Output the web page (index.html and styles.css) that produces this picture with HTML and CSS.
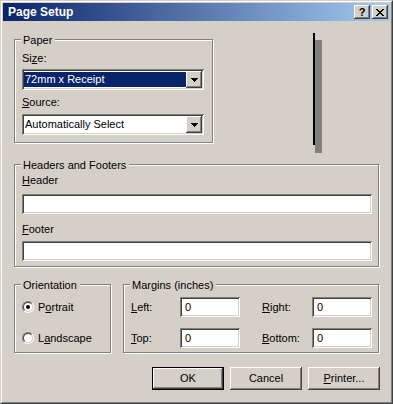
FILE: index.html
```html
<!DOCTYPE html>
<html>
<head>
<meta charset="utf-8">
<link rel="stylesheet" href="styles.css">
</head>
<body>
<div class="window">
  <div class="frame">
    <div class="titlebar">
      <span class="title">Page Setup</span>
      <div class="capbtns">
        <span class="capbtn help">?</span>
        <span class="capbtn close"><svg width="8" height="7" viewBox="0 0 8 7"><path d="M0 0h2v1H0zM6 0h2v1H6zM1 1h2v1H1zM5 1h2v1H5zM2 2h4v1H2zM3 3h2v1H3zM2 4h4v1H2zM1 5h2v1H1zM5 5h2v1H5zM0 6h2v1H0zM6 6h2v1H6z" fill="#000"/></svg></span>
      </div>
    </div>
    <div class="content">
      <div class="toprow">
        <div class="group paper">
          <span class="legend">Paper</span>
          <div class="label size-label">Si<u>z</u>e:</div>
          <div class="combo size-combo">
            <div class="combo-val selected">72mm x Receipt</div>
            <div class="dd"><svg width="7" height="4" viewBox="0 0 7 4"><path d="M0 0h7v1H0zM1 1h5v1H1zM2 2h3v1H2zM3 3h1v1H3z" fill="#000"/></svg></div>
          </div>
          <div class="label source-label"><u>S</u>ource:</div>
          <div class="combo source-combo">
            <div class="combo-val">Automatically Select</div>
            <div class="dd"><svg width="7" height="4" viewBox="0 0 7 4"><path d="M0 0h7v1H0zM1 1h5v1H1zM2 2h3v1H2zM3 3h1v1H3z" fill="#000"/></svg></div>
          </div>
        </div>
        <div class="preview"></div>
      </div>

      <div class="group hf">
        <span class="legend">Headers and Footers</span>
        <div class="label header-label"><u>H</u>eader</div>
        <div class="edit wide header-edit"></div>
        <div class="label footer-label"><u>F</u>ooter</div>
        <div class="edit wide footer-edit"></div>
      </div>

      <div class="bottomrow">
        <div class="group orient">
          <span class="legend">Orientation</span>
          <div class="radio-row"><span class="radio"><span class="radio-in"><span class="dot"></span></span></span><span>P<u>o</u>rtrait</span></div>
          <div class="radio-row"><span class="radio"><span class="radio-in"></span></span><span>L<u>a</u>ndscape</span></div>
        </div>
        <div class="group margins">
          <span class="legend">Margins (inches)</span>
          <span class="mlabel"><u>L</u>eft:</span>
          <div class="edit small">0</div>
          <span class="mlabel rlabel"><u>R</u>ight:</span>
          <div class="edit small">0</div>
          <span class="mlabel"><u>T</u>op:</span>
          <div class="edit small">0</div>
          <span class="mlabel rlabel"><u>B</u>ottom:</span>
          <div class="edit small">0</div>
        </div>
      </div>

      <div class="buttons">
        <div class="btn default"><span>OK</span></div>
        <div class="btn">Cancel</div>
        <div class="btn"><span><u>P</u>rinter...</span></div>
      </div>
    </div>
  </div>
</div>
</body>
</html>
```

FILE: styles.css
```css
* { box-sizing: border-box; }

body {
  margin: 0;
  font-family: "Liberation Sans", Arial, sans-serif;
  font-size: 11px;
  line-height: 13px;
  color: #000;
  background: #d4d0c8;
}

u { text-decoration: underline; text-underline-offset: 1px; }

.window {
  width: 393px;
  height: 404px;
  border: 1px solid;
  border-color: #d4d0c8 #404040 #404040 #d4d0c8;
}

.frame {
  height: 100%;
  border: 1px solid;
  border-color: #fff #808080 #808080 #fff;
  padding: 1px;
  background: #d4d0c8;
  display: flex;
  flex-direction: column;
}

.titlebar {
  flex: none;
  height: 18px;
  display: flex;
  align-items: center;
  padding: 0 2px 0 5px;
  background: linear-gradient(to right, #0a246a, #a6caf0);
}

.title {
  flex: 1;
  color: #fff;
  font-weight: bold;
  font-size: 12px;
}

.capbtns { display: flex; gap: 2px; }

.capbtn {
  width: 16px;
  height: 14px;
  background: #d4d0c8;
  box-shadow: inset -1px -1px #404040, inset 1px 1px #fff, inset -2px -2px #808080;
  display: flex;
  align-items: center;
  justify-content: center;
  font-weight: bold;
  font-size: 11px;
  line-height: 14px;
}

.capbtn svg { display: block; }

.content {
  flex: 1;
  padding: 0 11px;
  display: flex;
  flex-direction: column;
}

.toprow { display: flex; align-items: flex-start; }

.group {
  position: relative;
  border: 1px solid #808080;
  box-shadow: inset 1px 1px #fff, 1px 1px #fff;
}

.legend {
  position: absolute;
  top: -6px;
  left: 6px;
  padding: 0 3px 0 2px;
  background: #d4d0c8;
  line-height: 13px;
  white-space: nowrap;
}

.label { height: 13px; }

.paper {
  width: 199px;
  height: 104px;
  margin-top: 18px;
  padding: 0 0 0 7px;
}

.size-label { margin-top: 12px; }
.size-combo { margin-top: 4px; }
.source-label { margin-top: 6px; }
.source-combo { margin-top: 5px; }

.combo {
  width: 182px;
  height: 21px;
  padding: 2px;
  display: flex;
  background: #fff;
  box-shadow: inset 1px 1px #808080, inset -1px -1px #fff, inset 2px 2px #404040, inset -2px -2px #d4d0c8;
}

.combo-val {
  flex: 1;
  margin: 1px 0;
  padding-left: 1px;
  line-height: 15px;
  white-space: nowrap;
}

.combo-val.selected { background: #0a246a; color: #fff; }

.dd {
  width: 16px;
  height: 17px;
  background: #d4d0c8;
  box-shadow: inset -1px -1px #404040, inset 1px 1px #fff, inset -2px -2px #808080;
  display: flex;
  align-items: center;
  justify-content: center;
}

.dd svg { display: block; }

.preview {
  position: relative;
  width: 2px;
  height: 112px;
  margin-top: 12px;
  margin-left: 100px;
  background: #000;
}

.preview::after {
  content: "";
  position: absolute;
  left: 2px;
  top: 7px;
  width: 7px;
  height: 113px;
  background: #808080;
}

.hf {
  width: 365px;
  height: 103px;
  margin-top: 19px;
  padding: 0 0 0 7px;
}

.header-label { margin-top: 9px; }
.header-edit { margin-top: 7px; }
.footer-label { margin-top: 9px; }
.footer-edit { margin-top: 5px; }

.edit {
  height: 20px;
  background: #fff;
  padding: 0 0 0 5px;
  display: flex;
  align-items: center;
  box-shadow: inset 1px 1px #808080, inset -1px -1px #fff, inset 2px 2px #404040, inset -2px -2px #d4d0c8;
}

.edit.wide { width: 350px; }
.edit.small { width: 60px; }

.bottomrow {
  display: flex;
  margin-top: 17px;
  gap: 12px;
}

.orient {
  width: 97px;
  height: 69px;
  padding: 12px 0 0 7px;
  display: grid;
  grid-template-rows: 20px 20px;
  row-gap: 11px;
  align-content: start;
}

.radio-row {
  display: flex;
  align-items: center;
  gap: 4px;
}

.radio {
  width: 12px;
  height: 12px;
  border-radius: 50%;
  border: 1px solid;
  border-color: #808080 #fff #fff #808080;
  flex: none;
}

.radio-in {
  display: flex;
  align-items: center;
  justify-content: center;
  width: 10px;
  height: 10px;
  border-radius: 50%;
  border: 1px solid;
  border-color: #404040 #d4d0c8 #d4d0c8 #404040;
  background: #fff;
}

.dot {
  width: 4px;
  height: 4px;
  border-radius: 50%;
  background: #000;
}

.margins {
  width: 256px;
  height: 69px;
  padding: 12px 0 0 7px;
  display: grid;
  grid-template-columns: 49px 60px 72px 60px;
  grid-template-rows: 20px 20px;
  row-gap: 11px;
  align-items: center;
  align-content: start;
}

.rlabel { padding-left: 22px; }

.buttons {
  display: flex;
  justify-content: flex-end;
  gap: 6px;
  margin-top: 14px;
  margin-right: -1px;
}

.btn {
  width: 72px;
  height: 23px;
  display: flex;
  align-items: center;
  justify-content: center;
  background: #d4d0c8;
  box-shadow: inset -1px -1px #404040, inset 1px 1px #fff, inset -2px -2px #808080;
}

.btn.default {
  border: 1px solid #000;
}
```
